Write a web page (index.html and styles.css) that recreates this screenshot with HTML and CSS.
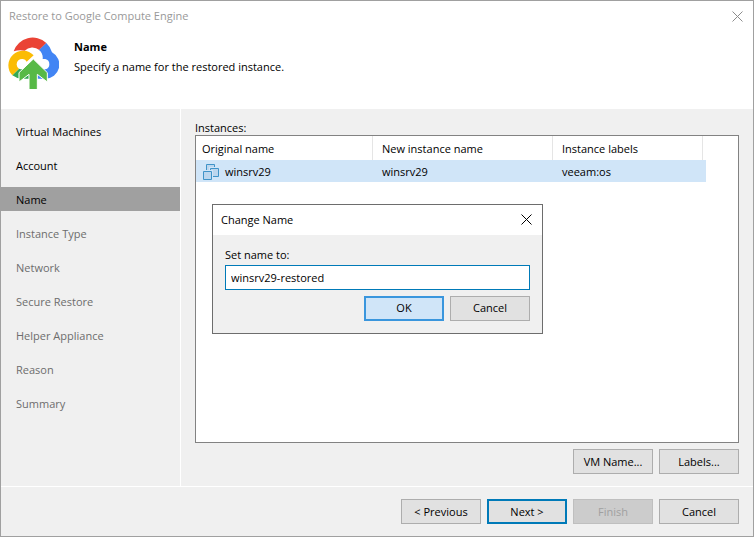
FILE: index.html
```html
<!DOCTYPE html>
<html lang="en">
<head>
<meta charset="utf-8">
<title>Restore to Google Compute Engine</title>
<link rel="stylesheet" href="styles.css">
</head>
<body>
<main class="window">
  <header class="header">
    <div class="titlebar">
      <span class="titlebar-text">Restore to Google Compute Engine</span>
      <button class="close" type="button" aria-label="Close window">
        <svg width="11" height="11" viewBox="0 0 11 11"><path d="M.5.5l10 10M10.500.5l-10 10"/></svg>
      </button>
    </div>
    <div class="banner">
      <svg class="logo" width="52" height="52" viewBox="9 9 156 156" aria-hidden="true">
        <path fill="#ea4335" d="M29 52A60 60 0 0 1 127 27L106 48A32 32 0 0 0 62 50Q46 46 29 52Z"/>
        <path fill="#4285f4" d="M127 27A60 60 0 0 1 144 55A42 42 0 0 1 124 134H92V106H124A16 16 0 0 0 124 75H116A30 30 0 0 0 105 48Z"/>
        <path fill="#34a853" d="M25 124L45 104Q50 106 55 106H90V134H52Q37 133 25 124Z"/>
        <path fill="#fbbc05" d="M25 124A43 43 0 1 1 89 64L68 83A16 16 0 1 0 45 104Z"/>
        <path fill="#57b947" stroke="#fff" stroke-width="3" d="M88 75L130 116V144L100 121V167H75V121L45 144V116Z"/>
      </svg>
      <div>
        <h1 class="step-title">Name</h1>
        <p class="step-text">Specify a name for the restored instance.</p>
      </div>
    </div>
  </header>

  <div class="body">
    <nav class="steps" aria-label="Wizard steps">
      <a class="step" href="#machines">Virtual Machines</a>
      <a class="step" href="#account">Account</a>
      <a class="step current" href="#name" aria-current="step">Name</a>
      <a class="step pending" href="#type">Instance Type</a>
      <a class="step pending" href="#network">Network</a>
      <a class="step pending" href="#secure">Secure Restore</a>
      <a class="step pending" href="#helper">Helper Appliance</a>
      <a class="step pending" href="#reason">Reason</a>
      <a class="step pending" href="#summary">Summary</a>
    </nav>
    <section class="content">
      <h2 class="list-label" id="instances">Instances:</h2>
      <div class="list">
        <table class="table" aria-labelledby="instances">
          <colgroup><col class="col-original"><col class="col-new"><col class="col-labels"><col class="col-end"></colgroup>
          <thead>
            <tr><th scope="col">Original name</th><th scope="col">New instance name</th><th scope="col">Instance labels</th><td></td></tr>
          </thead>
          <tbody>
            <tr>
              <td>
                <span class="vm">
                  <svg width="16" height="16" viewBox="0 0 16 16" fill="#bcd6ee" stroke="#3f93c8" aria-hidden="true">
                    <path d="M3.500.5h8v7h-8z"/>
                    <path stroke="#d0e5f8" stroke-width="3" d="M7.500 4.500h8v8h-8z"/>
                    <path d="M7.500 4.500h8v8h-8z"/>
                    <path stroke="#d0e5f8" stroke-width="3" d="M.5 7.500h8v8h-8z"/>
                    <path d="M.5 7.500h8v8h-8z"/>
                  </svg>
                  winsrv29
                </span>
              </td>
              <td>winsrv29</td><td>veeam:os</td><td></td>
            </tr>
          </tbody>
        </table>
      </div>
      <div class="actions">
        <button class="button" type="button">VM Name...</button>
        <button class="button" type="button">Labels...</button>
      </div>
    </section>
  </div>

  <footer class="footer actions">
    <button class="button" type="button">&lt; Previous</button>
    <button class="button primary" type="button">Next &gt;</button>
    <button class="button" type="button" disabled>Finish</button>
    <button class="button" type="button">Cancel</button>
  </footer>

  <form class="dialog" role="dialog" aria-labelledby="dialog-title">
    <div class="dialog-bar">
      <h2 class="dialog-title" id="dialog-title">Change Name</h2>
      <button class="close dark" type="button" aria-label="Close dialog">
        <svg width="11" height="11" viewBox="0 0 11 11"><path d="M.5.5l10 10M10.500.5l-10 10"/></svg>
      </button>
    </div>
    <div class="dialog-body">
      <label class="dialog-label" for="new-name">Set name to:</label>
      <input class="field" id="new-name" type="text" value="winsrv29-restored">
      <div class="actions">
        <button class="button hover" type="button">OK</button>
        <button class="button" type="button">Cancel</button>
      </div>
    </div>
  </form>
</main>
</body>
</html>
```
FILE: styles.css
```css
* { box-sizing: border-box; }

body {
  margin: 0;
  font: 11px/16px "Open Sans", "Noto Sans", sans-serif;
  color: #000;
}

h1, h2, p { margin: 0; font-size: inherit; font-weight: 400; }
button, input { font: inherit; color: inherit; }

.window {
  position: relative;
  display: flex;
  flex-direction: column;
  min-height: 100vh;
  border: 1px solid #a0a0a0;
  background: #f0f0f0;
}

.header { min-height: 108px; background: #fff; }

.titlebar {
  display: flex;
  align-items: center;
  justify-content: space-between;
  height: 30px;
  padding: 0 10px 0 8px;
  color: #999;
}

.close {
  display: flex;
  padding: 0;
  border: 0;
  background: none;
}
.close svg { fill: none; stroke: #8c8c8c; }
.close.dark svg { stroke: #000; }

.banner { display: flex; gap: 15px; padding: 6px; }
.logo { flex: none; }
h1.step-title { margin: 2px 0 4px; font-weight: 700; }

.body { display: flex; flex: 1; }

.steps {
  display: flex;
  flex-direction: column;
  gap: 10px;
  width: 180px;
  padding: 10px 0;
  border-right: 1px solid #fff;
}
.step {
  padding: 5px 15px 3px;
  color: #000;
  text-decoration: none;
}
.step.current { background: #a0a0a0; }
.step.pending { color: #6d6d6d; }

.content {
  display: flex;
  flex: 1;
  flex-direction: column;
  padding: 11px 14px 12px;
}
.list {
  flex: 1;
  margin: -1px 0 6px;
  border: 1px solid #828282;
  background: #fff;
}

.table { table-layout: fixed; width: 510px; max-width: 100%; border-spacing: 0; }
.col-original { width: 177px; }
.col-new { width: 180px; }
.col-labels { width: 150px; }
.table th, .table td { padding: 2px 0 0 9px; text-align: left; font-weight: 400; }
.table th:first-child, .table td:first-child { padding-left: 6px; }
.table td:last-child { padding: 0; }
.table th { height: 24px; border-right: 1px solid #e5e5e5; }
.table tbody td { height: 22px; background: #d0e5f8; }
.vm { display: flex; align-items: center; gap: 6px; padding-left: 1px; }

.actions { display: flex; justify-content: flex-end; gap: 6px; }
.button {
  width: 80px;
  height: 25px;
  padding: 0;
  border: 1px solid #adadad;
  background: #e1e1e1;
}
.button.primary { border: 2px solid #007ab8; }
.button.hover { border: 2px solid #3a96dd; background: #d0e5f8; }
.button:disabled { border-color: #bfbfbf; background: #ccc; color: #a0a0a0; }

.footer { padding: 12px 14px; border-top: 1px solid #fff; }

.dialog {
  position: absolute;
  top: 50%;
  left: 50%;
  width: 331px;
  margin: -65px 0 0 -165px;
  border: 1px solid #6d6d6d;
  background: #f0f0f0;
}
.dialog-bar {
  display: flex;
  align-items: center;
  justify-content: space-between;
  height: 30px;
  padding: 0 10px 0 8px;
  background: #fff;
}
.dialog-body { padding: 12px; }
.dialog-label { display: block; margin-bottom: 2px; }
.field {
  display: block;
  width: 100%;
  height: 25px;
  margin-bottom: 6px;
  padding: 0 5px;
  border: 1px solid #007ab8;
  outline: 0;
  background: #fff;
}
```
